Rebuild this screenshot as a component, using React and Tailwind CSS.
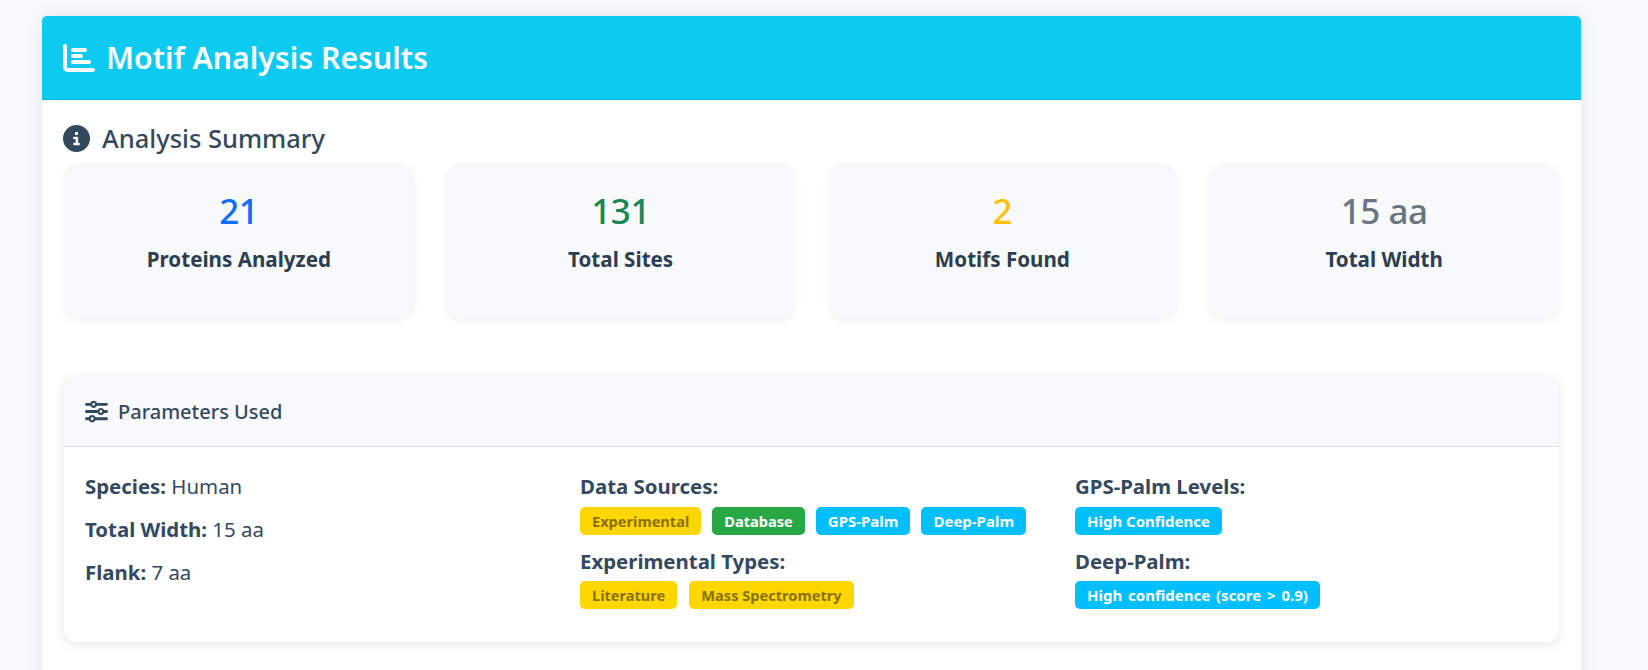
import { FaChartBar, FaCircleInfo, FaSliders } from "react-icons/fa6"

const stats = [
  { value: "21", label: "Proteins Analyzed", color: "text-[#0d6efd]" },
  { value: "131", label: "Total Sites", color: "text-[#198754]" },
  { value: "2", label: "Motifs Found", color: "text-[#ffc107]" },
  { value: "15 aa", label: "Total Width", color: "text-[#6c757d]" },
]

function Badge({ kind, children }) {
  const kinds = {
    yellow: "bg-[#ffd700] text-[#8b6f00] text-[14.6px]",
    green: "bg-[#28a745] text-white text-[14.6px]",
    blue: "bg-[#00bfff] text-white text-[15px]",
  }
  return (
    <span className={`inline-block h-7 rounded-[5px] px-3 leading-7 font-bold ${kinds[kind]}`}>
      {children}
    </span>
  )
}

export default function App() {
  return (
    <div className="h-[670px] overflow-hidden bg-[#f8f9fa] pt-4 pl-[42px] pr-[67px] font-['Noto_Sans','Open_Sans',sans-serif] text-[#34495e]">
      <div className="rounded-lg bg-white shadow-[0_0_20px_rgba(0,0,0,0.08)] h-[700px]">
        <div className="flex h-[84px] items-center gap-[11px] rounded-t-[5px] border-b border-[#0bb5d8] bg-[#0dcaf0] px-[21px] text-white">
          <FaChartBar className="text-[32px]" />
          <h1 className="pt-[1px] text-[30.2px] font-semibold">Motif Analysis Results</h1>
        </div>
        <div className="px-[22px]">
          <h2 className="mt-[20px] flex h-[37px] items-center gap-[12px] text-[25.5px] leading-[37px] font-medium">
            <FaCircleInfo className="-ml-[1px] text-[27px]" />
            Analysis Summary
          </h2>
          <div className="mt-[6px] grid grid-cols-4 gap-8">
            {stats.map(s => (
              <div key={s.label} className="h-[155px] rounded-2xl bg-[#f8f9fa] pt-[24px] text-center shadow-[0_3px_10px_rgba(0,0,0,0.05)]">
                <div className={`text-[35px] leading-[48px] font-medium tracking-[-0.5px] ${s.color}`}>{s.value}</div>
                <div className="mt-[10px] text-[20.6px] leading-[28px] font-bold text-[#2c3e50]">{s.label}</div>
              </div>
            ))}
          </div>
          <div className="mt-[59px] rounded-xl bg-white shadow-[0_2px_12px_rgba(0,0,0,0.1)]">
            <div className="flex h-[70px] items-center gap-[10px] rounded-t-xl border-b border-[#dee2e6] bg-[#f8f9fa] px-[21px] text-[20px] font-medium">
              <FaSliders className="text-[23px]" />
              Parameters Used
            </div>
            <div className="grid h-[195px] grid-cols-[495px_495px_1fr] pt-[25px] pl-[21px] text-[20.4px] leading-[28px]">
              <div className="flex flex-col gap-[15px]">
                <div><b className="font-bold">Species:</b> Human</div>
                <div><b className="font-bold">Total Width:</b> 15 aa</div>
                <div><b className="font-bold">Flank:</b> 7 aa</div>
              </div>
              <div>
                <div className="font-bold">Data Sources:</div>
                <div className="mt-[7px] flex gap-[11px]">
                  <Badge kind="yellow">Experimental</Badge>
                  <Badge kind="green">Database</Badge>
                  <Badge kind="blue">GPS-Palm</Badge>
                  <Badge kind="blue">Deep-Palm</Badge>
                </div>
                <div className="mt-[12px] font-bold">Experimental Types:</div>
                <div className="mt-[6px] flex gap-[12px]">
                  <Badge kind="yellow">Literature</Badge>
                  <Badge kind="yellow">Mass Spectrometry</Badge>
                </div>
              </div>
              <div>
                <div className="font-bold">GPS-Palm Levels:</div>
                <div className="mt-[7px] flex">
                  <Badge kind="blue">High Confidence</Badge>
                </div>
                <div className="mt-[12px] font-bold">Deep-Palm:</div>
                <div className="mt-[6px] flex [word-spacing:2px]">
                  <Badge kind="blue">High confidence (score &gt; 0.9)</Badge>
                </div>
              </div>
            </div>
          </div>
        </div>
      </div>
    </div>
  )
}
